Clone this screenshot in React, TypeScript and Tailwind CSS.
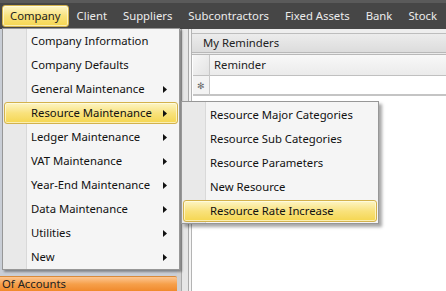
const MENUS = ['Company', 'Client', 'Suppliers', 'Subcontractors', 'Fixed Assets', 'Bank', 'Stock']

const COMPANY_ITEMS: { label: string; sub?: boolean }[] = [
  { label: 'Company Information' },
  { label: 'Company Defaults' },
  { label: 'General Maintenance', sub: true },
  { label: 'Resource Maintenance', sub: true },
  { label: 'Ledger Maintenance', sub: true },
  { label: 'VAT Maintenance', sub: true },
  { label: 'Year-End Maintenance', sub: true },
  { label: 'Data Maintenance', sub: true },
  { label: 'Utilities', sub: true },
  { label: 'New', sub: true },
]

const RESOURCE_ITEMS = [
  'Resource Major Categories',
  'Resource Sub Categories',
  'Resource Parameters',
  'New Resource',
  'Resource Rate Increase',
]

const HILITE =
  'border border-[#d3b24c] rounded-[3px] bg-linear-to-b from-[#fdf5c4] via-[#f9e27c] to-[#f5d64e] shadow-[inset_0_0_0_1px_rgba(255,255,240,0.6)]'

function Arrow() {
  return (
    <svg width="4" height="7" viewBox="0 0 4 7" className="absolute right-[12px] top-[9px]">
      <path d="M0 0 L4 3.5 L0 7 Z" fill="#111" />
    </svg>
  )
}

function MenuItem({ label, sub, active }: { label: string; sub?: boolean; active?: boolean }) {
  return (
    <div className="relative h-[24px] flex items-center">
      {active && <div className={`absolute left-[1px] right-[1px] top-[1px] bottom-[1px] ${HILITE}`} />}
      <span className="relative pl-[28px] text-[#111] whitespace-nowrap">{label}</span>
      {sub && <Arrow />}
    </div>
  )
}

export default function App() {
  return (
    <div className="relative w-[446px] h-[291px] overflow-hidden bg-[#d6d6d6] text-[11.3px] leading-none font-['Segoe_UI','Noto_Sans',sans-serif]">
      {/* Menu bar */}
      <div className="h-[29px] flex items-center bg-[#464646] border-t-[3px] border-[#5a5a5a] pl-[2px]">
        {MENUS.map((m, i) => (
          <div
            key={m}
            className={[
              'h-[22px] flex items-center whitespace-nowrap',
              i === 0 ? `${HILITE} px-[7px] text-[#222]` : 'px-[8px] text-[#ececec]',
            ].join(' ')}
          >
            {m}
          </div>
        ))}
      </div>

      {/* Body */}
      <div className="flex h-[262px]">
        <aside className="w-[177px] flex flex-col justify-end bg-[#c9ced6]">
          <div className="h-[15px] flex items-center pl-[2px] text-[#222] border-t border-[#d98a3a] rounded-tr-[2px] bg-linear-to-b from-[#fcc690] via-[#f6a04a] to-[#f08a2c]">
            Of Accounts
          </div>
        </aside>
        <div className="w-[14px] flex bg-[#dcdcdc]">
          <div className="w-[4px] bg-[#d0d0d0]" />
          <div className="w-[1px] bg-[#a9a9a9]" />
          <div className="w-[6px] bg-[#e6e6e6]" />
          <div className="w-[1px] bg-[#a9a9a9]" />
          <div className="w-[2px] bg-[#f4f4f4]" />
        </div>
        <main className="flex-1 flex flex-col bg-white border-l border-[#b4b4b4]">
          <div className="h-[5px] bg-[#eeeeee] border-b border-[#bdbdbd]" />
          <div className="h-[21px] flex items-center pl-[11px] text-[#222] bg-linear-to-b from-[#ececec] to-[#dcdcdc] border-b-[3px] border-double border-[#b8b8b8]">
            My Reminders
          </div>
          <div className="flex pl-[1px]">
            <div className="w-[17px] flex flex-col border-r border-[#c8c8c8]">
              <div className="h-[21px] bg-linear-to-br from-[#f7f7f7] to-[#e3e3e3] border-b border-[#c0c0c0]" />
              <div className="h-[20px] flex items-center justify-center text-[9px] text-[#666] bg-[#f3f3f3] border-b-2 border-[#c4c4c4]">
                ✻
              </div>
            </div>
            <div className="flex-1 flex flex-col">
              <div className="h-[21px] flex items-center pl-[4px] text-[#222] bg-linear-to-b from-[#f8f8f8] to-[#ebebeb] border-b border-[#c0c0c0]">
                Reminder
              </div>
              <div className="h-[20px] bg-white border-b-2 border-[#c4c4c4]" />
            </div>
          </div>
        </main>
      </div>

      {/* Company dropdown */}
      <div className="absolute left-[2px] top-[28px] w-[178px] h-[242px] bg-[#f5f5f5] border border-[#979797] shadow-[2px_2px_2px_rgba(0,0,0,0.35)]">
        <div className="absolute left-0 top-0 bottom-0 w-[24px] bg-[#e9e9e9] border-r border-[#d9d9d9]" />
        <div className="relative">
          {COMPANY_ITEMS.map((it, i) => (
            <MenuItem key={it.label} label={it.label} sub={it.sub} active={i === 3} />
          ))}
        </div>
      </div>

      {/* Resource submenu */}
      <div className="absolute left-[181px] top-[101px] w-[198px] h-[123px] bg-[#f5f5f5] border border-[#979797] shadow-[3px_3px_3px_rgba(0,0,0,0.35)]">
        <div className="absolute left-0 top-0 bottom-0 w-[24px] bg-[#e9e9e9] border-r border-[#d9d9d9]" />
        <div className="relative pt-[1px]">
          {RESOURCE_ITEMS.map((r, i) => (
            <MenuItem key={r} label={r} active={i === 4} />
          ))}
        </div>
      </div>
    </div>
  )
}
